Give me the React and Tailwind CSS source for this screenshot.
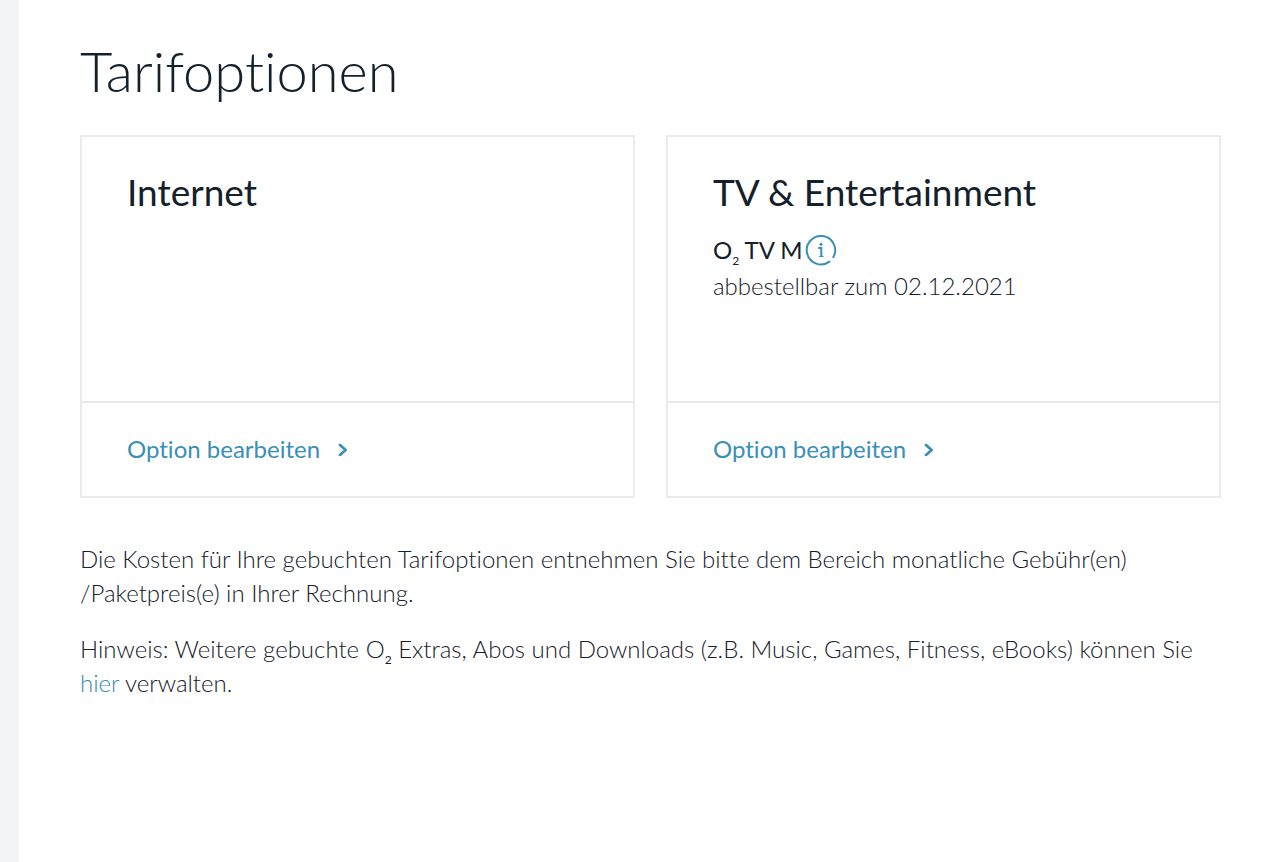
import React from "react";

function InfoIcon() {
  return (
    <svg viewBox="0 0 32 32" className="size-8" fill="none" stroke="currentColor" strokeWidth="2" strokeLinecap="round" aria-hidden="true">
      <path d="M24.4 27.6 A14.2 14.2 0 1 1 28.3 23.2" />
      <path d="M13.2 14H16.3V22.6" strokeWidth="2" strokeLinecap="butt" />
      <path d="M14 22.4H18.6" strokeWidth="1" strokeLinecap="butt" />
      <circle cx="16" cy="10.2" r="1.5" fill="currentColor" stroke="none" />
    </svg>
  );
}

function Chevron() {
  return (
    <svg viewBox="0 0 10 14" className="h-3.5 w-2.5" fill="none" stroke="currentColor" strokeWidth="2.7" strokeLinecap="round" strokeLinejoin="round" aria-hidden="true">
      <path d="M2 3 7.6 8 2 13" />
    </svg>
  );
}

function O2() {
  return (
    <>
      O<sub className="-bottom-1.5 text-xs leading-none font-normal">2</sub>
    </>
  );
}

function OptionCard({ title, children }) {
  return (
    <section className="flex flex-col border-2 border-[#e9ebec]">
      <div className="min-h-66 flex-1 px-[45px] pt-[35px]">
        <h2 className="text-[37px] leading-10 font-normal">{title}</h2>
        {children}
      </div>
      <div className="border-t-2 border-[#e6eaeb] px-[45px] pt-7 pb-[29px]">
        <a href="#bearbeiten" className="inline-flex items-center gap-[18px] text-2xl leading-9 text-[#3a8fb7]">
          Option bearbeiten
          <Chevron />
        </a>
      </div>
    </section>
  );
}

export default function App() {
  return (
    <div className="min-h-screen border-l-[19px] border-[#f3f4f6] bg-white pr-[59px] pl-[61px] font-['Lato',sans-serif] text-[#14202a] [font-variant-ligatures:none]">
      <main className="pt-[39px]">
        <h1 className="text-[56px] leading-16 font-light">Tarifoptionen</h1>
        <div className="mt-8 grid grid-cols-2 gap-[31px]">
          <OptionCard title="Internet" />
          <OptionCard title="TV &amp; Entertainment">
            <div className="mt-5 flex items-center gap-0.5 text-2xl leading-9">
              <span>
                <O2 /> TV M
              </span>
              <button type="button" aria-label="Informationen zu TV M" className="text-[#3a8fb7]">
                <InfoIcon />
              </button>
            </div>
            <p className="text-2xl leading-9 font-light">abbestellbar zum 02.12.2021</p>
          </OptionCard>
        </div>
        <div className="mt-11 space-y-[22px] text-2xl leading-[34px] font-light">
          <p>
            Die Kosten für Ihre gebuchten Tarifoptionen entnehmen Sie bitte dem Bereich monatliche Gebühr(en)
            <br />
            /Paketpreis(e) in Ihrer Rechnung.
          </p>
          <p>
            Hinweis: Weitere gebuchte <O2 /> Extras, Abos und Downloads (z.B. Music, Games, Fitness, eBooks) können Sie{" "}
            <a href="#verwalten" className="text-[#3289b3]">hier</a> verwalten.
          </p>
        </div>
      </main>
    </div>
  );
}
